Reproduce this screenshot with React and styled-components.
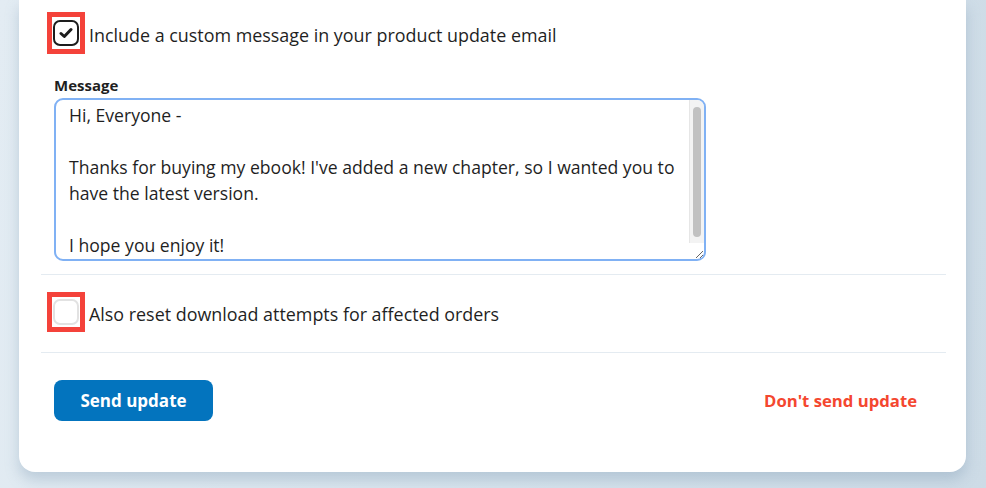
import React from "react";
import styled, { createGlobalStyle } from "styled-components";

const Global = createGlobalStyle`
  html, body { margin: 0; padding: 0; }
  body {
    width: 986px;
    height: 488px;
    overflow: hidden;
    font-family: "Open Sans", "Noto Sans", sans-serif;
    color: #1f1f1f;
    background: linear-gradient(100deg, #e3ecf3 0%, #d6e3ec 55%, #cddbe6 100%);
  }
`;

const Page = styled.div`
  padding: 0 20px 16px 19px;
`;

const Card = styled.div`
  background: #fff;
  border-radius: 0 0 16px 16px;
  padding: 0 20px 0 22px;
  box-shadow: 0 8px 14px rgba(120, 150, 175, 0.35);
`;

const Section = styled.div`
  display: flex;
  flex-direction: column;
  align-items: flex-start;
  padding: ${(p) => p.$pad};
  border-bottom: 1px solid #e4ebf1;
`;

const CheckRow = styled.label`
  display: flex;
  align-items: center;
  gap: 4px;
  font-size: 17.9px;
  cursor: pointer;
`;

const RowText = styled.span`
  padding-top: 3px;
`;

const Highlight = styled.span`
  display: inline-flex;
  border: 5px solid #f4423a;
  padding: ${(p) => p.$pad};
`;

const Box = styled.span`
  width: 26px;
  height: 26px;
  box-sizing: border-box;
  border-radius: 7px;
  border: 2px solid ${(p) => (p.$checked ? "#1d1d1d" : "#e2e2e2")};
  background: #fff;
  display: flex;
  align-items: center;
  justify-content: center;
`;

const Label = styled.div`
  margin: 22px 0 4px 7px;
  font-size: 15px;
  line-height: 18px;
  font-weight: 700;
`;

const Field = styled.div`
  position: relative;
  margin-left: 7px;
  width: 652px;
  height: 163px;
`;

const TextArea = styled.textarea`
  display: block;
  width: 100%;
  height: 100%;
  box-sizing: border-box;
  border: 2px solid #80b1f4;
  border-radius: 9px;
  padding: 2px 22px 0 13px;
  font-family: inherit;
  font-size: 17.6px;
  line-height: 26px;
  color: #1f1f1f;
  outline: none;
  resize: both;
  overflow: hidden;
`;

const ScrollTrack = styled.div`
  position: absolute;
  top: 2px;
  right: 2px;
  width: 15px;
  height: 143px;
  background: #f3f3f3;
  border-left: 1px solid #e6e6e6;
  border-top-right-radius: 7px;
  box-sizing: border-box;
  pointer-events: none;
`;

const ScrollThumb = styled.div`
  position: absolute;
  top: 7px;
  left: 3px;
  width: 8px;
  height: 130px;
  border-radius: 4px;
  background: #c1c1c1;
`;

const Actions = styled.div`
  display: flex;
  align-items: center;
  justify-content: space-between;
  padding: 27px 29px 51px 13px;
`;

const Primary = styled.button`
  height: 41px;
  width: 159px;
  border: none;
  border-radius: 8px;
  background: #0374be;
  color: #fff;
  font-family: inherit;
  font-size: 17px;
  font-weight: 700;
  cursor: pointer;
`;

const Danger = styled.button`
  border: none;
  background: none;
  padding: 0;
  color: #f4472f;
  font-family: inherit;
  font-size: 16.7px;
  font-weight: 700;
  cursor: pointer;
`;

const Check = () => (
  <svg width="14" height="12" viewBox="0 0 14 12" fill="none">
    <path d="M2 6.5L5.3 9.5L12 2.5" stroke="#1d1d1d" strokeWidth="3" strokeLinecap="round" strokeLinejoin="round" />
  </svg>
);

const message =
  "Hi, Everyone -\n\nThanks for buying my ebook! I've added a new chapter, so I wanted you to have the latest version.\n\nI hope you enjoy it!\n\n";

export default function App() {
  return (
    <>
      <Global />
      <Page>
        <Card>
          <Section $pad="12px 0 13px 6px">
            <CheckRow>
              <Highlight $pad="3px 1px">
                <Box $checked>
                  <Check />
                </Box>
              </Highlight>
              <RowText>Include a custom message in your product update email</RowText>
            </CheckRow>
            <Label>Message</Label>
            <Field>
              <TextArea defaultValue={message} />
              <ScrollTrack>
                <ScrollThumb />
              </ScrollTrack>
            </Field>
          </Section>
          <Section $pad="17px 0 20px 6px">
            <CheckRow>
              <Highlight $pad="2px 1px">
                <Box />
              </Highlight>
              <RowText>Also reset download attempts for affected orders</RowText>
            </CheckRow>
          </Section>
          <Actions>
            <Primary>Send update</Primary>
            <Danger>Don't send update</Danger>
          </Actions>
        </Card>
      </Page>
    </>
  );
}
